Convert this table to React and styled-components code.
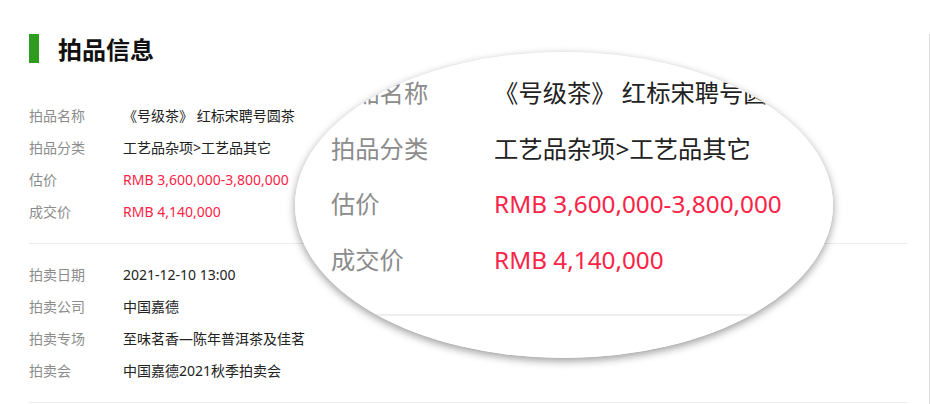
import React from "react";
import styled, { createGlobalStyle } from "styled-components";

const GlobalStyle = createGlobalStyle`
  html, body {
    margin: 0;
    padding: 0;
    background: #fff;
    font-family: "Noto Sans", "Noto Sans CJK SC", sans-serif;
  }
`;

const ZOOM = 1.735;

const Page = styled.div`
  position: relative;
  width: 930px;
  height: 404px;
  overflow: hidden;
`;

const Sheet = styled.div`
  width: 930px;
  padding-top: 13px;
  background: #fff;
`;

const Panel = styled.div`
  box-sizing: border-box;
  width: 930px;
  min-height: 391px;
  padding: 0 21px 0 29px;
  border-right: 1px solid #dcdcdc;
`;

const Header = styled.div`
  display: flex;
  align-items: center;
  height: 29px;
  margin: 21px 0 22px;
`;

const Bar = styled.span`
  width: 10px;
  height: 29px;
  background: #2e9c1e;
  margin-right: 19px;
`;

const Title = styled.h2`
  margin: 0;
  font-family: "Noto Sans CJK SC", sans-serif;
  font-size: 24px;
  font-weight: bold;
  color: #111;
`;

const Section = styled.div`
  padding: 15px 0;
  border-bottom: 1px solid #ececec;
`;

const Row = styled.div`
  display: flex;
  height: 32px;
  line-height: 32px;
  font-size: 14px;
  white-space: nowrap;
`;

const Label = styled.span`
  width: 94px;
  flex: none;
  color: #8c8c8c;
`;

const Value = styled.span`
  color: ${(p) => (p.$price ? "#fb2447" : "#222")};
`;

const Lens = styled.div`
  position: absolute;
  left: 295px;
  top: 52px;
  width: 538px;
  height: 306px;
  border-radius: 50%;
  overflow: hidden;
  background: #fff;
  box-shadow: 0 3px 9px rgba(0, 0, 0, 0.4);
`;

const Magnified = styled.div`
  position: absolute;
  left: 0;
  top: 0;
  transform-origin: 0 0;
  transform: translate(-14.3px, -159.5px) scale(${ZOOM});
`;

const lot = [
  ["拍品名称", "《号级茶》 红标宋聘号圆茶"],
  ["拍品分类", "工艺品杂项>工艺品其它"],
  ["估价", "RMB 3,600,000-3,800,000", true],
  ["成交价", "RMB 4,140,000", true],
];

const sale = [
  ["拍卖日期", "2021-12-10 13:00"],
  ["拍卖公司", "中国嘉德"],
  ["拍卖专场", "至味茗香—陈年普洱茶及佳茗"],
  ["拍卖会", "中国嘉德2021秋季拍卖会"],
];

const InfoRows = ({ items }) => (
  <Section>
    {items.map(([label, value, price]) => (
      <Row key={label}>
        <Label>{label}</Label>
        <Value $price={price}>{value}</Value>
      </Row>
    ))}
  </Section>
);

const LotSheet = () => (
  <Sheet>
    <Panel>
      <Header>
        <Bar />
        <Title>拍品信息</Title>
      </Header>
      <InfoRows items={lot} />
      <InfoRows items={sale} />
    </Panel>
  </Sheet>
);

export default function App() {
  return (
    <>
      <GlobalStyle />
      <Page>
        <LotSheet />
        <Lens>
          <Magnified>
            <LotSheet />
          </Magnified>
        </Lens>
      </Page>
    </>
  );
}
